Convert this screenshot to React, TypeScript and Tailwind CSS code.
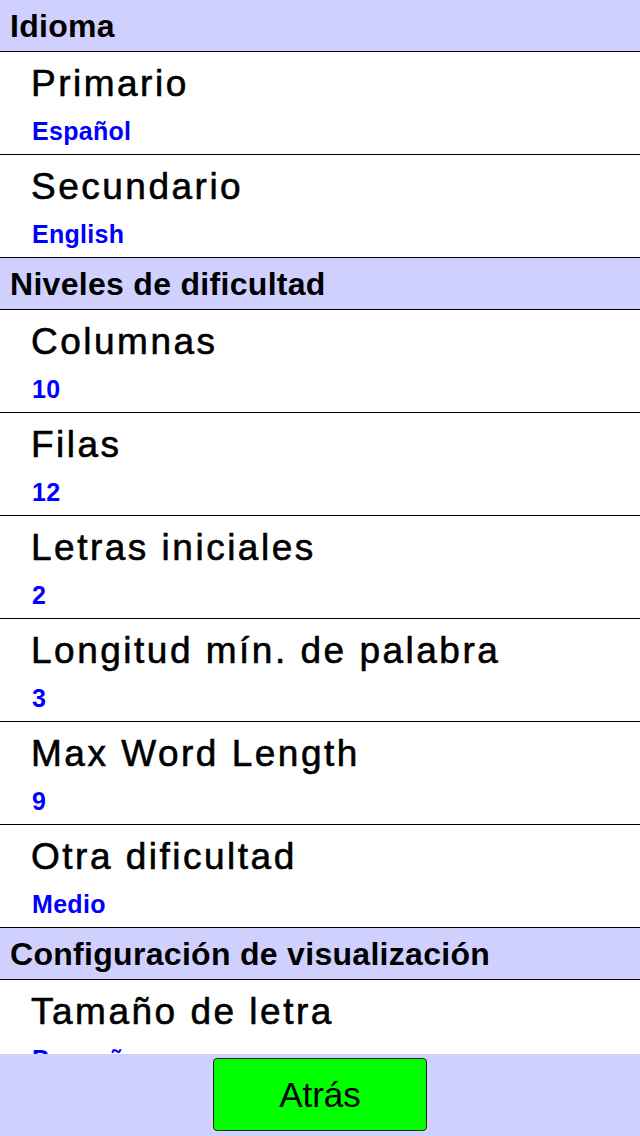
import React from "react";

type Row = { title: string; value: string };
type Section = { header: string; rows: Row[] };

const sections: Section[] = [
  {
    header: "Idioma",
    rows: [
      { title: "Primario", value: "Español" },
      { title: "Secundario", value: "English" },
    ],
  },
  {
    header: "Niveles de dificultad",
    rows: [
      { title: "Columnas", value: "10" },
      { title: "Filas", value: "12" },
      { title: "Letras iniciales", value: "2" },
      { title: "Longitud mín. de palabra", value: "3" },
      { title: "Max Word Length", value: "9" },
      { title: "Otra dificultad", value: "Medio" },
    ],
  },
  {
    header: "Configuración de visualización",
    rows: [{ title: "Tamaño de letra", value: "Pequeño" }],
  },
];

function SettingRow({ row }: { row: Row }) {
  return (
    <div className="h-[103px] shrink-0 border-b border-black bg-white pl-[31px] pt-[13px]">
      <div className="text-[37px] leading-none tracking-[2.5px] text-black [-webkit-text-stroke:0.6px_black]">
        {row.title}
      </div>
      <div className="mt-[17px] ml-[1px] text-[25px] font-bold leading-none tracking-[0.3px] text-[#0000ff]">
        {row.value}
      </div>
    </div>
  );
}

export default function App() {
  return (
    <div
      className="flex h-[1136px] w-full flex-col overflow-hidden bg-white"
      style={{ fontFamily: '"Liberation Sans", Arial, sans-serif' }}
    >
      <div className="flex flex-1 flex-col overflow-hidden">
        {sections.map((section) => (
          <React.Fragment key={section.header}>
            <div className="flex h-[52px] shrink-0 items-center border-b border-black bg-[#d0d0ff] pl-[10px]">
              <span className="text-[32px] font-bold leading-none tracking-[0.3px] text-black">
                {section.header}
              </span>
            </div>
            {section.rows.map((row) => (
              <SettingRow key={row.title} row={row} />
            ))}
          </React.Fragment>
        ))}
      </div>

      {/* barra inferior */}
      <div className="flex h-[82px] shrink-0 justify-center bg-[#d0d0ff] pt-[4px]">
        <button className="flex h-[73px] w-[214px] items-center justify-center rounded-[4px] border border-[#222] bg-[#00ff00] text-[35px] leading-none text-black">
          Atrás
        </button>
      </div>
    </div>
  );
}
